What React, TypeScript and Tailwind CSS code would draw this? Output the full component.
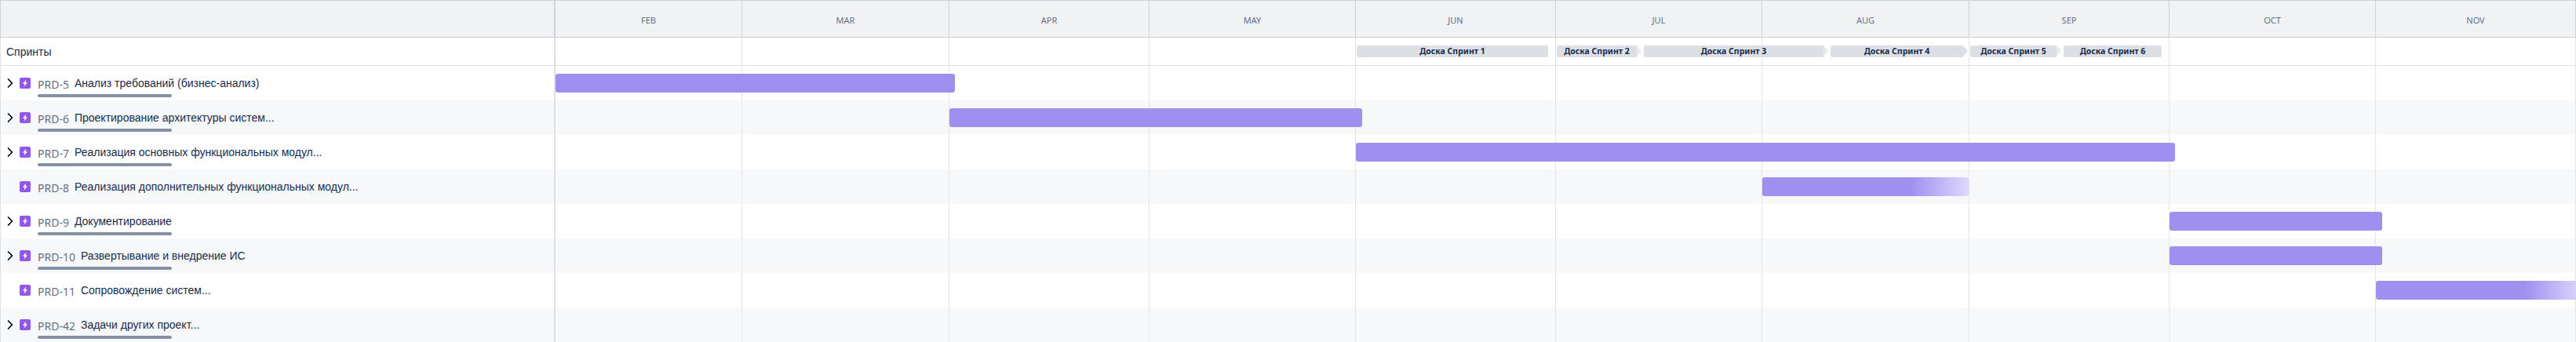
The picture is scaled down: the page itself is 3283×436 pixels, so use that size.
import { ChevronRight } from "lucide-react";

const months = [
	{ name: "FEB", width: "w-[238px]" },
	{ name: "MAR", width: "w-[264px]" },
	{ name: "APR", width: "w-[255px]" },
	{ name: "MAY", width: "w-[263px]" },
	{ name: "JUN", width: "w-[255px]" },
	{ name: "JUL", width: "w-[263px]" },
	{ name: "AUG", width: "w-[264px]" },
	{ name: "SEP", width: "w-[255px]" },
	{ name: "OCT", width: "w-[263px]" },
	{ name: "NOV", width: "w-[255px]" },
];

const sprints = [
	{ name: "Доска Спринт 1", place: "left-[1021px] w-[244px]", tip: "" },
	{ name: "Доска Спринт 2", place: "left-[1276px] w-[108px]", tip: "border-l-[#e9ebee]" },
	{ name: "Доска Спринт 3", place: "left-[1387px] w-[235px]", tip: "border-l-[#e9ebee]" },
	{ name: "Доска Спринт 4", place: "left-[1625px] w-[175px]", tip: "border-l-[#dcdfe4]" },
	{ name: "Доска Спринт 5", place: "left-[1803px] w-[116px]", tip: "border-l-[#e9ebee]" },
	{ name: "Доска Спринт 6", place: "left-[1922px] w-[125px]", tip: "" },
];

const solid = "bg-[#9f8fef]";
const fading = "bg-[linear-gradient(to_right,#9f8fef_72%,#dfd8fd_100%)]";

const issues = [
	{ key: "PRD-5", title: "Анализ требований (бизнес-анализ)", children: true, bar: `left-0 w-[509px] ${solid}` },
	{ key: "PRD-6", title: "Проектирование архитектуры систем...", children: true, bar: `left-[502px] w-[526px] ${solid}` },
	{ key: "PRD-7", title: "Реализация основных функциональных модул...", children: true, bar: `left-[1020px] w-[1044px] ${solid}` },
	{ key: "PRD-8", title: "Реализация дополнительных функциональных модул...", children: false, bar: `left-[1538px] w-[263px] ${fading}` },
	{ key: "PRD-9", title: "Документирование", children: true, bar: `left-[2057px] w-[271px] ${solid}` },
	{ key: "PRD-10", title: "Развертывание и внедрение ИС", children: true, bar: `left-[2057px] w-[271px] ${solid}` },
	{ key: "PRD-11", title: "Сопровождение систем...", children: false, bar: `left-[2320px] w-[263px] ${fading}` },
	{ key: "PRD-42", title: "Задачи других проект...", children: true, bar: "" },
];

function EpicIcon() {
	return (
		<span className="mb-[1px] flex h-[14px] w-[14px] shrink-0 items-center justify-center rounded-[2px] bg-[#9256e8]">
			<svg width="14" height="14" viewBox="0 0 14 14">
				<path d="M8.2 2.4 4 7.8h2.5L5.8 11.6 10 6.2H7.5z" fill="#fff" />
			</svg>
		</span>
	);
}

function MonthCells({ labels }: { labels?: boolean }) {
	return (
		<div className="flex h-full">
			{months.map((month) => (
				<div
					key={month.name}
					className={`${month.width} flex shrink-0 items-center justify-center border-r pt-[4px] text-[11px] font-['Noto_Sans',sans-serif] text-[#626f86] ${
						labels ? "border-[#ccd0d7]" : "border-[#e2e4e8]"
					}`}
				>
					{labels ? month.name : ""}
				</div>
			))}
		</div>
	);
}

export default function App() {
	return (
		<div className="h-[436px] w-[3283px] overflow-hidden bg-white font-['Liberation_Sans',sans-serif] text-sm text-[#172b4d]">
			<div className="flex h-[48px] border-y border-[#ccd0d7] bg-[#f1f2f4]">
				<div className="w-[708px] shrink-0 border-l border-r-2 border-[#ccd0d7]" />
				<div className="flex-1">
					<MonthCells labels />
				</div>
			</div>

			<div className="flex h-[36px] border-b border-[#dfe1e6]">
				<div className="flex w-[708px] shrink-0 items-center border-l border-r-2 border-[#dfe1e6] pl-[7px]">
					Спринты
				</div>
				<div className="relative flex-1">
					<MonthCells />
					{sprints.map((sprint) => (
						<div key={sprint.name} className={`absolute top-[10px] flex h-[15px] ${sprint.place}`}>
							<div
								className={`flex flex-1 items-center justify-center bg-[#dcdfe4] font-['Noto_Sans',sans-serif] text-[10.5px] font-bold ${
									sprint.tip ? "rounded-l-[3px]" : "rounded-[3px]"
								}`}
							>
								{sprint.name}
							</div>
							{sprint.tip && (
								<div className={`h-0 w-0 border-y-[7.5px] border-l-[6px] border-y-transparent ${sprint.tip}`} />
							)}
						</div>
					))}
				</div>
			</div>

			{issues.map((issue, index) => (
				<div key={issue.key} className={`flex h-[44px] ${index % 2 === 1 ? "bg-[#f7f8f9]" : "bg-white"}`}>
					<div className="relative w-[708px] shrink-0 border-l border-r-2 border-[#dfe1e6]">
						<div className="flex h-[30px] items-end pl-[6px]">
							<span className="mb-[1px] flex h-[14px] w-[18px] shrink-0 items-center">
								{issue.children && (
									<ChevronRight size={20} strokeWidth={2} className="-ml-[4px] shrink-0 text-black" />
								)}
							</span>
							<EpicIcon />
							<span className="ml-[9px] shrink-0 translate-y-[3px] font-['Noto_Sans',sans-serif] leading-[18px] text-[#626f86]">
								{issue.key}
							</span>
							<span className="ml-[7px] truncate leading-[16px]">{issue.title}</span>
						</div>
						{issue.children && (
							<div className="ml-[47px] mt-[6px] h-[4px] w-[171px] rounded-full bg-[#8590a2]" />
						)}
					</div>
					<div className="relative flex-1">
						<MonthCells />
						{issue.bar && <div className={`absolute top-[10px] h-[24px] rounded-[3px] ${issue.bar}`} />}
					</div>
				</div>
			))}
		</div>
	);
}
